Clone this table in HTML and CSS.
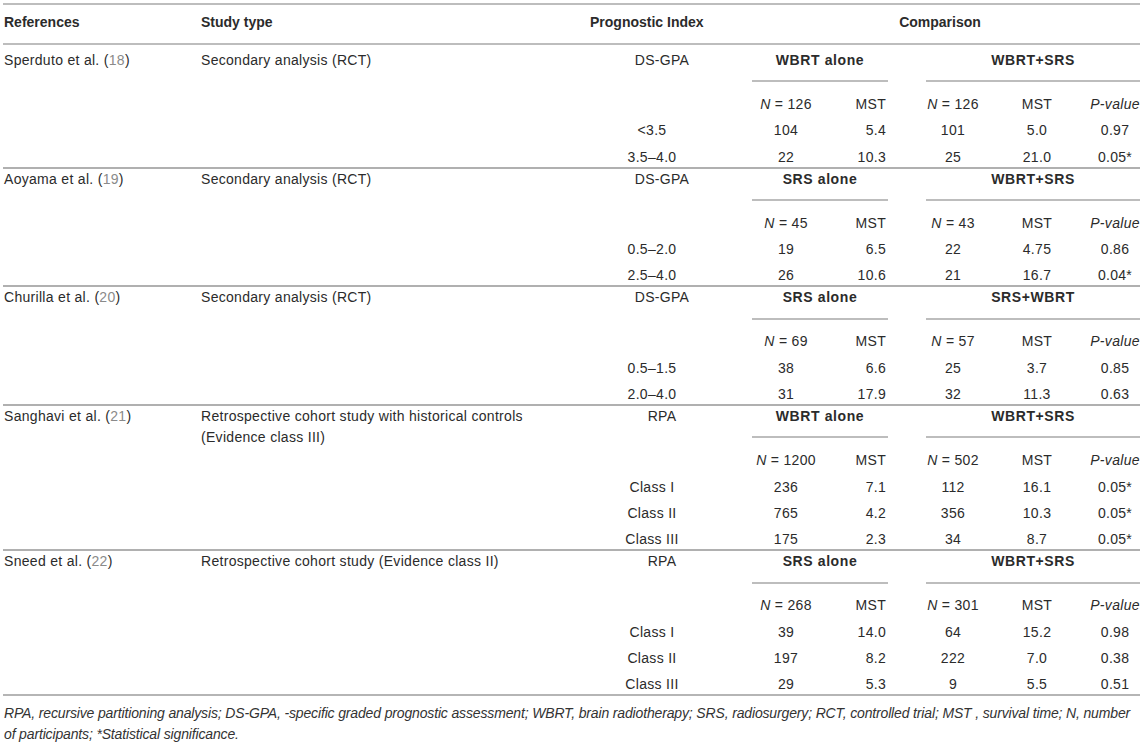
FILE: index.html
```html
<!DOCTYPE html>
<html lang="en">
<head>
<meta charset="utf-8">
<title>Prognostic index comparison</title>
<link rel="stylesheet" href="styles.css">
</head>
<body>
<div class="wrap">
<table class="tbl">
  <colgroup>
    <col class="c-ref"><col class="c-type"><col class="c-idx">
    <col class="c-n1"><col class="c-m1"><col class="c-n2"><col class="c-m2"><col class="c-p">
  </colgroup>
  <thead>
    <tr class="hdr">
      <th class="l">References</th>
      <th class="l">Study type</th>
      <th class="l">Prognostic Index</th>
      <th colspan="5" class="cmp">Comparison</th>
    </tr>
  </thead>
  <tbody class="grp first">
    <tr class="ghead">
      <td class="ref">Sperduto et al. (<span class="cite">18</span>)</td>
      <td class="type">Secondary analysis (RCT)</td>
      <td class="idx">DS-GPA</td>
      <td colspan="2" class="arm"><div class="arm-l">WBRT alone</div></td>
      <td colspan="3" class="arm"><div class="arm-r">WBRT+SRS</div></td>
    </tr>
    <tr class="row">
      <td></td><td></td><td></td>
      <td class="n"><i>N</i> = 126</td><td class="m1">MST</td><td class="n"><i>N</i> = 126</td><td class="m2">MST</td><td class="p"><i>P-value</i></td>
    </tr>
    <tr class="row"><td></td><td></td><td class="idx">&lt;3.5</td><td class="n">104</td><td class="m1">5.4</td><td class="n">101</td><td class="m2">5.0</td><td class="p">0.97</td></tr>
    <tr class="row"><td></td><td></td><td class="idx">3.5–4.0</td><td class="n">22</td><td class="m1">10.3</td><td class="n">25</td><td class="m2">21.0</td><td class="p">0.05*</td></tr>
  </tbody>
  <tbody class="grp">
    <tr class="ghead">
      <td class="ref">Aoyama et al. (<span class="cite">19</span>)</td>
      <td class="type">Secondary analysis (RCT)</td>
      <td class="idx">DS-GPA</td>
      <td colspan="2" class="arm"><div class="arm-l">SRS alone</div></td>
      <td colspan="3" class="arm"><div class="arm-r">WBRT+SRS</div></td>
    </tr>
    <tr class="row">
      <td></td><td></td><td></td>
      <td class="n"><i>N</i> = 45</td><td class="m1">MST</td><td class="n"><i>N</i> = 43</td><td class="m2">MST</td><td class="p"><i>P-value</i></td>
    </tr>
    <tr class="row"><td></td><td></td><td class="idx">0.5–2.0</td><td class="n">19</td><td class="m1">6.5</td><td class="n">22</td><td class="m2">4.75</td><td class="p">0.86</td></tr>
    <tr class="row"><td></td><td></td><td class="idx">2.5–4.0</td><td class="n">26</td><td class="m1">10.6</td><td class="n">21</td><td class="m2">16.7</td><td class="p">0.04*</td></tr>
  </tbody>
  <tbody class="grp">
    <tr class="ghead">
      <td class="ref">Churilla et al. (<span class="cite">20</span>)</td>
      <td class="type">Secondary analysis (RCT)</td>
      <td class="idx">DS-GPA</td>
      <td colspan="2" class="arm"><div class="arm-l">SRS alone</div></td>
      <td colspan="3" class="arm"><div class="arm-r">SRS+WBRT</div></td>
    </tr>
    <tr class="row">
      <td></td><td></td><td></td>
      <td class="n"><i>N</i> = 69</td><td class="m1">MST</td><td class="n"><i>N</i> = 57</td><td class="m2">MST</td><td class="p"><i>P-value</i></td>
    </tr>
    <tr class="row"><td></td><td></td><td class="idx">0.5–1.5</td><td class="n">38</td><td class="m1">6.6</td><td class="n">25</td><td class="m2">3.7</td><td class="p">0.85</td></tr>
    <tr class="row"><td></td><td></td><td class="idx">2.0–4.0</td><td class="n">31</td><td class="m1">17.9</td><td class="n">32</td><td class="m2">11.3</td><td class="p">0.63</td></tr>
  </tbody>
  <tbody class="grp">
    <tr class="ghead">
      <td class="ref">Sanghavi et al. (<span class="cite">21</span>)</td>
      <td class="type">Retrospective cohort study with historical controls (Evidence class III)</td>
      <td class="idx">RPA</td>
      <td colspan="2" class="arm"><div class="arm-l">WBRT alone</div></td>
      <td colspan="3" class="arm"><div class="arm-r">WBRT+SRS</div></td>
    </tr>
    <tr class="row">
      <td></td><td></td><td></td>
      <td class="n"><i>N</i> = 1200</td><td class="m1">MST</td><td class="n"><i>N</i> = 502</td><td class="m2">MST</td><td class="p"><i>P-value</i></td>
    </tr>
    <tr class="row"><td></td><td></td><td class="idx">Class I</td><td class="n">236</td><td class="m1">7.1</td><td class="n">112</td><td class="m2">16.1</td><td class="p">0.05*</td></tr>
    <tr class="row"><td></td><td></td><td class="idx">Class II</td><td class="n">765</td><td class="m1">4.2</td><td class="n">356</td><td class="m2">10.3</td><td class="p">0.05*</td></tr>
    <tr class="row"><td></td><td></td><td class="idx">Class III</td><td class="n">175</td><td class="m1">2.3</td><td class="n">34</td><td class="m2">8.7</td><td class="p">0.05*</td></tr>
  </tbody>
  <tbody class="grp">
    <tr class="ghead">
      <td class="ref">Sneed et al. (<span class="cite">22</span>)</td>
      <td class="type">Retrospective cohort study (Evidence class II)</td>
      <td class="idx">RPA</td>
      <td colspan="2" class="arm"><div class="arm-l">SRS alone</div></td>
      <td colspan="3" class="arm"><div class="arm-r">WBRT+SRS</div></td>
    </tr>
    <tr class="row">
      <td></td><td></td><td></td>
      <td class="n"><i>N</i> = 268</td><td class="m1">MST</td><td class="n"><i>N</i> = 301</td><td class="m2">MST</td><td class="p"><i>P-value</i></td>
    </tr>
    <tr class="row"><td></td><td></td><td class="idx">Class I</td><td class="n">39</td><td class="m1">14.0</td><td class="n">64</td><td class="m2">15.2</td><td class="p">0.98</td></tr>
    <tr class="row"><td></td><td></td><td class="idx">Class II</td><td class="n">197</td><td class="m1">8.2</td><td class="n">222</td><td class="m2">7.0</td><td class="p">0.38</td></tr>
    <tr class="row"><td></td><td></td><td class="idx">Class III</td><td class="n">29</td><td class="m1">5.3</td><td class="n">9</td><td class="m2">5.5</td><td class="p">0.51</td></tr>
  </tbody>
</table>
<p class="note"><i>RPA, recursive partitioning analysis; DS-GPA, -specific graded prognostic assessment; WBRT, brain radiotherapy; SRS, radiosurgery; RCT, controlled trial; MST , survival time; N, number of participants; *Statistical significance.</i></p>
</div>
</body>
</html>
```

FILE: styles.css
```css
html, body {
  margin: 0;
  padding: 0;
  background: #ffffff;
}

body {
  font-family: "Liberation Sans", Arial, Helvetica, sans-serif;
  font-size: 14px;
  color: #2b2b2b;
}

.wrap {
  padding: 3px 5px 0 3px;
}

.tbl {
  width: 1137px;
  border-collapse: collapse;
  table-layout: fixed;
  border-top: 2px solid #bdbdbd;
  border-bottom: 2px solid #b5b5b5;
  letter-spacing: 0.3px;
}

.c-ref { width: 197px; }
.c-type { width: 389px; }
.c-idx { width: 151px; }
.c-n1 { width: 92px; }
.c-m1 { width: 78px; }
.c-n2 { width: 86px; }
.c-m2 { width: 82px; }
.c-p { width: 62px; }

th, td {
  padding: 0;
  font-weight: normal;
  vertical-align: top;
}

.hdr th {
  padding-top: 6px;
  padding-bottom: 10px;
  line-height: 22px;
  font-weight: bold;
  letter-spacing: 0;
  border-bottom: 2px solid #bdbdbd;
}

.hdr th.l { text-align: left; padding-left: 1px; }
.hdr th.cmp { text-align: center; }

.grp + .grp {
  border-top: 2px solid #b0b0b0;
}

.ghead td {
  line-height: 20.4px;
}

.first .ghead td { padding-top: 5px; }

.ghead .ref,
.ghead .type { padding-left: 1px; }

.cite { color: #8a8a8a; }

.idx {
  text-align: center;
  padding-right: 25px;
}

.ghead .idx { padding-right: 5px; }

.arm {
  text-align: center;
  padding-bottom: 8.6px;
}

.arm div {
  font-weight: bold;
  letter-spacing: 0.6px;
  padding-bottom: 9.8px;
  border-bottom: 2px solid #bdbdbd;
}

.arm-l { margin: 0 22px 0 12px; }
.arm-r { margin: 0 0 0 16px; }

.row td {
  padding-top: 3.2px;
  padding-bottom: 3.2px;
  line-height: 20px;
}

.row:last-child td { padding-bottom: 0; }

.n { text-align: center; }
.m1 { text-align: right; padding-right: 24px; }
.m2 { text-align: center; }
.p { text-align: center; padding-left: 12px; }

.note {
  margin: 6.5px 0 0 1px;
  font-size: 14px;
  line-height: 21px;
  color: #333333;
  letter-spacing: -0.15px;
}
```
